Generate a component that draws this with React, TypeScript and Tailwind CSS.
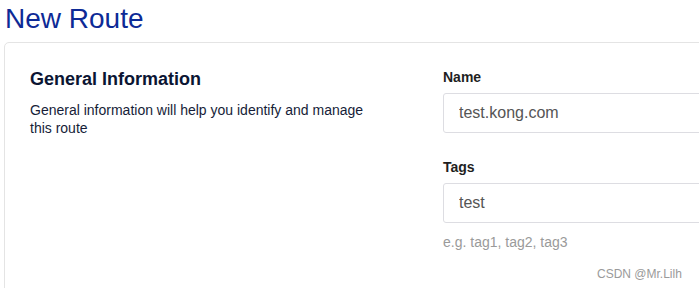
import React from 'react';

const font = { fontFamily: '"Liberation Sans", Arial, sans-serif' };

export default function App() {
  return (
    <div className="relative h-[288px] w-[699px] overflow-hidden bg-white" style={font}>
      {/* Page title */}
      <h1 className="ml-[5px] mt-[3px] text-[28px] leading-[32px] font-normal text-[#0d2a96]">
        New Route
      </h1>

      {/* Form card */}
      <div className="ml-[4px] mt-[7px] w-[900px] min-h-[400px] rounded-tl-[5px] border border-[#e4e4e4] bg-white pl-[25px] pt-[24px]">
        <div className="flex items-start">
          <div className="w-[413px] shrink-0">
            <h2 className="text-[18px] leading-[24px] font-bold text-[#0b1533]">General Information</h2>
            <p className="mt-[10px] max-w-[340px] text-[14px] leading-[18px] text-[#161d38]">
              General information will help you identify and manage this route
            </p>
          </div>

          <div className="w-[320px] shrink-0">
            <label className="block text-[14px] leading-[20px] font-bold text-[#1f1f1f]">Name</label>
            <input
              readOnly
              value="test.kong.com"
              className="mt-[6px] block h-[40px] w-full rounded-[3px] border border-[#dddde2] px-[15px] text-[16px] text-[#555555] outline-none"
              style={font}
            />

            <label className="mt-[24px] block text-[14px] leading-[20px] font-bold text-[#1f1f1f]">Tags</label>
            <input
              readOnly
              value="test"
              className="mt-[6px] block h-[40px] w-full rounded-[3px] border border-[#dddde2] px-[15px] text-[16px] text-[#555555] outline-none"
              style={font}
            />
            <p className="mt-[9px] text-[14px] leading-[20px] text-[#9a9a9a]">e.g. tag1, tag2, tag3</p>
          </div>
        </div>
      </div>

      {/* Watermark */}
      <span className="absolute left-[597px] top-[266px] text-[12px] leading-[16px] text-[#9a9a9a]">
        CSDN @Mr.Lilh
      </span>
    </div>
  );
}
